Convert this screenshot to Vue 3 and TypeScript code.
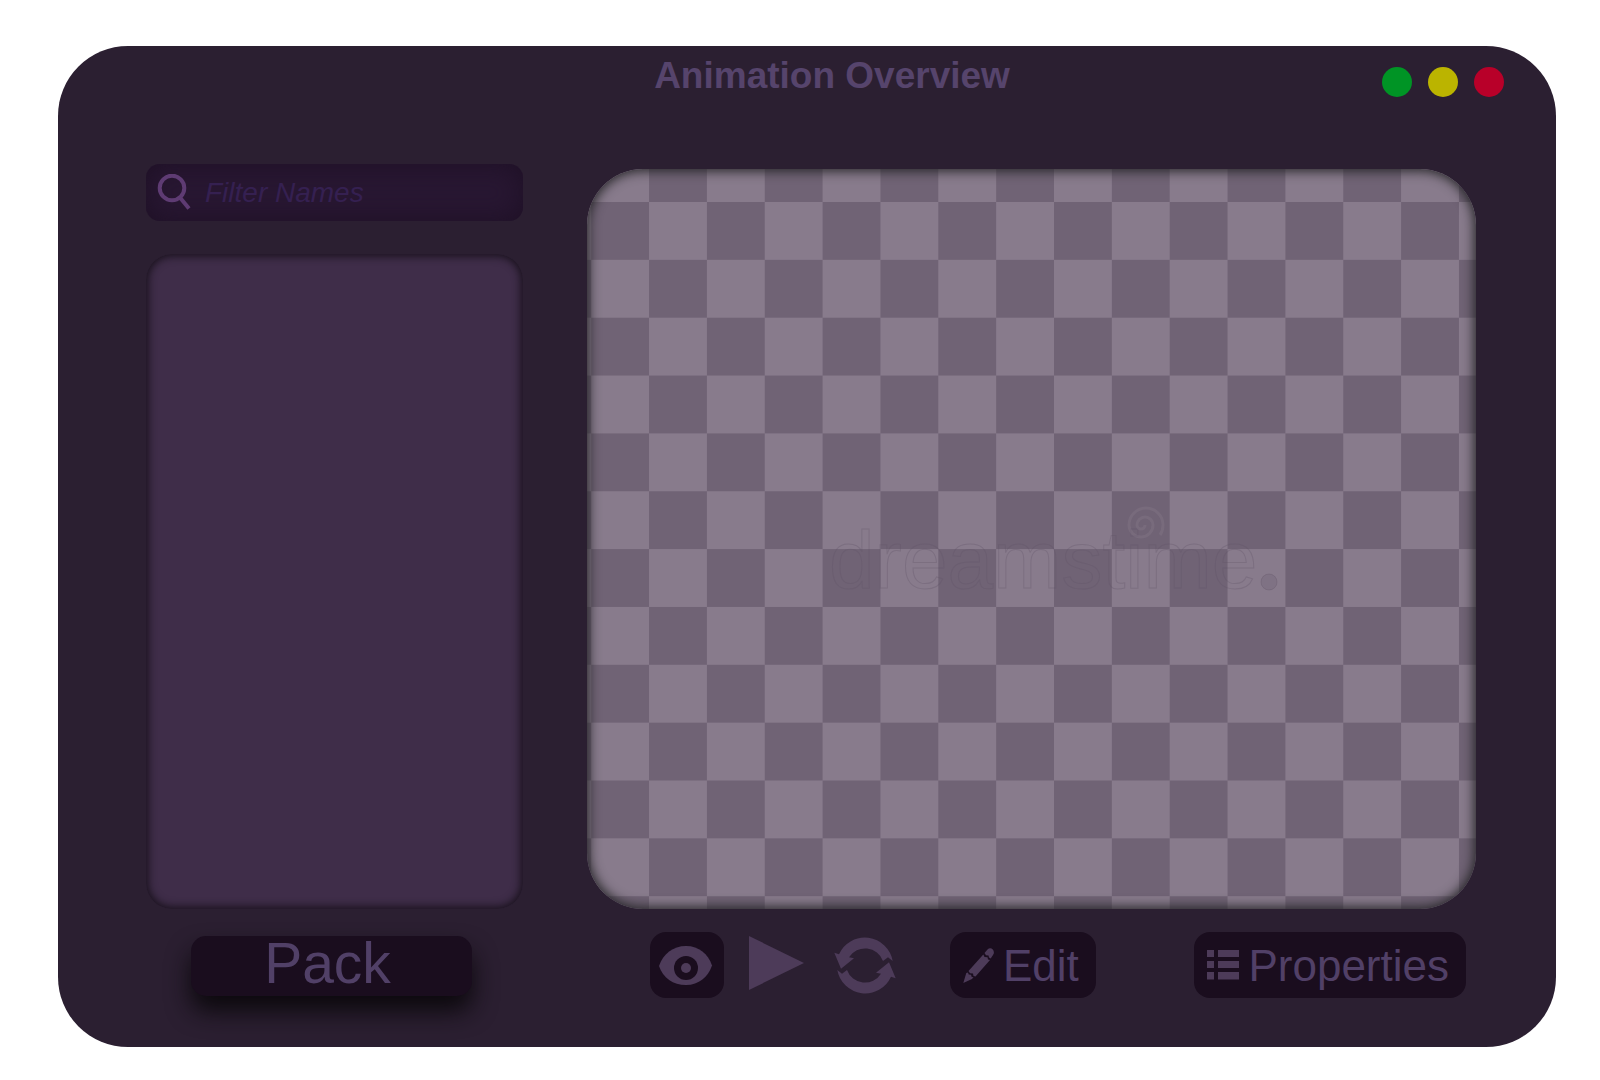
<script setup lang="ts">
import { ref } from 'vue'

const filter = ref('')
const lights = [
  { name: 'Minimize', tone: 'green' },
  { name: 'Maximize', tone: 'yellow' },
  { name: 'Close', tone: 'red' },
]
</script>

<template>
  <main class="window">
    <header class="titlebar">
      <h1>Animation Overview</h1>
      <div class="lights">
        <button v-for="l in lights" :key="l.tone" type="button" class="light" :class="l.tone" :aria-label="l.name"></button>
      </div>
    </header>

    <div class="workspace">
      <aside class="sidebar">
        <label class="search">
          <svg width="34" height="38" viewBox="0 0 34 38" aria-hidden="true">
            <circle cx="15" cy="14" r="12.300" />
            <path d="M22.500 23L32 34.500" />
          </svg>
          <input v-model="filter" type="text" placeholder="Filter Names" aria-label="Filter Names" />
        </label>
        <div class="names"></div>
      </aside>

      <section class="preview" aria-label="Preview">
        <svg viewBox="0 0 889 740" preserveAspectRatio="xMinYMin slice">
          <defs>
            <pattern id="checker" x="4.200" y="33" width="115.700" height="115.700" patternUnits="userSpaceOnUse">
              <rect width="115.700" height="115.700" fill="#887b8c" />
              <rect width="57.850" height="57.850" fill="#706375" />
              <rect x="57.850" y="57.850" width="57.850" height="57.850" fill="#706375" />
            </pattern>
          </defs>
          <rect width="889" height="740" fill="url(#checker)" />
          <g class="mark">
            <text x="242" y="419">dreamstime</text>
            <path d="M558 356a4 4 0 0 1 -8 0a8 8 0 0 1 16 0a12 12 0 0 1 -24 0a17 17 0 0 1 34 0q0 6 -3 10" />
            <circle cx="682" cy="413" r="8" />
          </g>
        </svg>
      </section>

      <div class="pack-row">
        <button type="button" class="pack">Pack</button>
      </div>

      <div class="toolbar">
        <button type="button" class="dark eye" aria-label="Show">
          <svg width="57" height="39" viewBox="0 0 57 39">
            <path d="M0 20C4 8 14 0 27 0S49 8 53 19.500C49 31 40 39 27 39S4 32 0 20Z" />
            <circle cx="27" cy="22" r="12" fill="#1a0d1e" />
            <circle cx="27" cy="22" r="5" />
          </svg>
        </button>
        <button type="button" class="plain" aria-label="Play">
          <svg width="55" height="58" viewBox="0 0 55 58"><path d="M0 0L55 27L0 54Z" /></svg>
        </button>
        <button type="button" class="plain loop" aria-label="Loop">
          <svg width="62" height="58" viewBox="0 -1 62 58">
            <path id="arc" d="M58.700 24A28.300 28.300 0 0 0 5 17.300L0.300 15.700L7 31.700L20 21.300L15 20.300A19 19 0 0 1 49 24L54 20.300Z" />
            <use href="#arc" transform="rotate(180 31 28.500)" />
          </svg>
        </button>
        <button type="button" class="dark edit">
          <svg width="31" height="35" viewBox="0 0 31 35">
            <path d="M0.300 35L3.300 25L5 24.500L5.700 26.500L8 26.800L8.700 29L10.500 29.300L9 31Z" />
            <path d="M5.500 23L20.300 6.500L21.500 9L24.500 9.300L25 11.500L27 12L12.500 28.500L10.500 28L10 25.500L7 25.300Z" />
            <path d="M21.500 5L24.500 1.500C28-2 33 3 30 7L27.700 10.500L26 9.500L25.500 7.500L23 7.300Z" />
          </svg>
          <span>Edit</span>
        </button>
        <button type="button" class="dark props">
          <svg width="32" height="30" viewBox="0 0 32 30">
            <path d="M0 0H7V7H0ZM11 0H32V7H11ZM0 11H7V18H0ZM11 11H32V18H11ZM0 22H7V29.500H0ZM11 22H32V29.500H11Z" />
          </svg>
          <span>Properties</span>
        </button>
      </div>
    </div>
  </main>
</template>

<style>
body {
  background: #fff;
}
</style>

<style scoped>
.window {
  margin: 46px 44px 32px 58px;
  padding-bottom: 49px;
  border-radius: 70px;
  background: #2b1f31;
  font-family: "Liberation Sans", Arial, sans-serif;
  overflow: hidden;
}
button {
  padding: 0;
  border: 0;
  background: none;
  color: #514067;
  font-family: inherit;
  cursor: pointer;
}
svg {
  display: block;
  flex: none;
}
.titlebar {
  display: flex;
  align-items: flex-start;
  padding: 8px 52px 0 224px;
  height: 110px;
}
h1 {
  flex: 1;
  margin: 0;
  color: #56446c;
  font-size: 37px;
  line-height: 44px;
  text-align: center;
}
.lights {
  display: flex;
  gap: 16px;
  padding-top: 13px;
}
.light {
  width: 30px;
  height: 30px;
  border-radius: 50%;
}
.green { background: #009425; }
.yellow { background: #bbb400; }
.red { background: #b80029; }
.workspace {
  display: grid;
  grid-template-columns: minmax(0, 377fr) minmax(0, 889fr);
  column-gap: 64px;
  row-gap: 23px;
  padding: 0 80px 0 88px;
}
.sidebar {
  display: flex;
  flex-direction: column;
  gap: 33px;
}
.search {
  display: flex;
  align-items: center;
  gap: 14px;
  height: 57px;
  box-sizing: border-box;
  padding: 0 12px 0 11px;
  border-radius: 14px;
  background: #281732;
  box-shadow: inset 0 0 28px #1e1025;
}
.search svg {
  fill: none;
  stroke: #5e3b73;
  stroke-width: 4;
}
input {
  flex: 1;
  min-width: 0;
  padding: 0;
  border: 0;
  outline: 0;
  background: none;
  color: #5e3b73;
  font: italic 28px "Liberation Sans", Arial, sans-serif;
}
input::placeholder {
  color: #352051;
  opacity: 1;
}
.names {
  flex: 1;
  min-height: 655px;
  border-radius: 26px;
  background: #3f2d49;
  box-shadow: inset 0 0 8px 2px #17101a;
}
.preview {
  position: relative;
  margin-top: 5px;
  border-radius: 56px;
  overflow: hidden;
}
.preview svg {
  width: 100%;
  height: 100%;
}
.preview::after {
  content: "";
  position: absolute;
  inset: 0;
  border-radius: inherit;
  box-shadow: inset 0 0 12px 2px #242426;
}
.mark {
  fill: none;
  stroke: #5f5266;
  stroke-opacity: 0.3;
  stroke-width: 1;
}
.mark text {
  font-size: 82px;
}
.mark path {
  stroke: #8a7d8e;
  stroke-width: 3;
}
.mark circle {
  fill: #5f5266;
  fill-opacity: 0.2;
}
.pack-row {
  display: flex;
  justify-content: center;
  align-items: flex-start;
  padding: 4px 6px 0 0;
}
.pack {
  width: 281px;
  height: 60px;
  padding: 0 8px 5px 0;
  border-radius: 15px;
  background: #1a0d1e;
  box-shadow: 0 15px 24px #0c090d;
  font-size: 57px;
  line-height: 55px;
}
.toolbar {
  display: flex;
  align-items: center;
  padding: 0 10px 0 63px;
}
.toolbar svg {
  fill: #4d3b59;
}
.dark {
  display: flex;
  align-items: center;
  gap: 9px;
  height: 66px;
  border-radius: 16px;
  background: #1a0d1e;
  font-size: 44px;
  line-height: 50px;
}
.dark span {
  padding-top: 2px;
}
.eye {
  justify-content: center;
  width: 74px;
}
.plain {
  margin-left: 25px;
}
.loop {
  margin-left: 30px;
}
.edit {
  margin-left: 54px;
  padding: 0 17px 0 13px;
}
.props {
  margin-left: auto;
  padding: 0 17px 0 13px;
}
</style>
